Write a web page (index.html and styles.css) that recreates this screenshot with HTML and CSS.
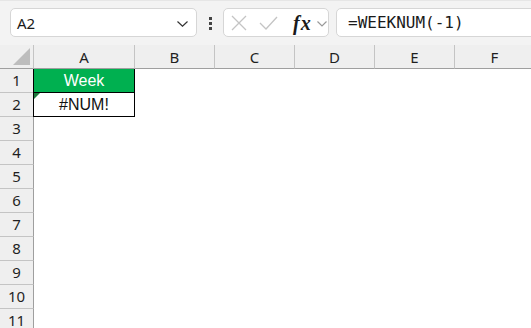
FILE: index.html
```html
<!DOCTYPE html>
<html lang="en">
<head>
    <meta charset="UTF-8">
    <title>WEEKNUM</title>
    <link rel="stylesheet" href="styles.css">
</head>
<body>
    <div class="toolbar">
        <div class="namebox">
            <span class="ref">A2</span>
            <svg class="chev" width="11" height="6" viewBox="0 0 11 6"><path d="M0.5 0.5 L5.5 5.2 L10.5 0.5" fill="none" stroke="#333" stroke-width="1.2"/></svg>
        </div>
        <div class="dots"><span></span><span></span><span></span></div>
        <div class="fxbox">
            <svg class="icon" width="16" height="16" viewBox="0 0 16 16"><path d="M1 1 L15 15 M15 1 L1 15" stroke="#c4c4c4" stroke-width="1.3" fill="none"/></svg>
            <svg class="icon" width="19" height="14" viewBox="0 0 19 14"><path d="M1 7 L7 13 L18 1" stroke="#c4c4c4" stroke-width="1.3" fill="none"/></svg>
            <span class="fx">fx</span>
            <svg class="chev small" width="10" height="6" viewBox="0 0 10 6"><path d="M0.5 0.5 L5 5 L9.5 0.5" fill="none" stroke="#9a9a9a" stroke-width="1.2"/></svg>
        </div>
        <div class="formula">=WEEKNUM(-1)</div>
    </div>

    <div class="sheet">
        <div class="corner">
            <svg width="17" height="17" viewBox="0 0 17 17"><polygon points="17,0 17,17 0,17" fill="#bdbdbd"/></svg>
        </div>
        <div class="colhead">A</div>
        <div class="colhead">B</div>
        <div class="colhead">C</div>
        <div class="colhead">D</div>
        <div class="colhead">E</div>
        <div class="colhead">F</div>

        <div class="rowhead">1</div>
        <div class="cell title">Week</div>
        <div class="cell"></div><div class="cell"></div><div class="cell"></div><div class="cell"></div><div class="cell"></div>

        <div class="rowhead">2</div>
        <div class="cell result"><span class="flag"></span>#NUM!</div>
        <div class="cell"></div><div class="cell"></div><div class="cell"></div><div class="cell"></div><div class="cell"></div>

        <div class="rowhead">3</div><div class="cell"></div><div class="cell"></div><div class="cell"></div><div class="cell"></div><div class="cell"></div><div class="cell"></div>
        <div class="rowhead">4</div><div class="cell"></div><div class="cell"></div><div class="cell"></div><div class="cell"></div><div class="cell"></div><div class="cell"></div>
        <div class="rowhead">5</div><div class="cell"></div><div class="cell"></div><div class="cell"></div><div class="cell"></div><div class="cell"></div><div class="cell"></div>
        <div class="rowhead">6</div><div class="cell"></div><div class="cell"></div><div class="cell"></div><div class="cell"></div><div class="cell"></div><div class="cell"></div>
        <div class="rowhead">7</div><div class="cell"></div><div class="cell"></div><div class="cell"></div><div class="cell"></div><div class="cell"></div><div class="cell"></div>
        <div class="rowhead">8</div><div class="cell"></div><div class="cell"></div><div class="cell"></div><div class="cell"></div><div class="cell"></div><div class="cell"></div>
        <div class="rowhead">9</div><div class="cell"></div><div class="cell"></div><div class="cell"></div><div class="cell"></div><div class="cell"></div><div class="cell"></div>
        <div class="rowhead">10</div><div class="cell"></div><div class="cell"></div><div class="cell"></div><div class="cell"></div><div class="cell"></div><div class="cell"></div>
        <div class="rowhead">11</div><div class="cell"></div><div class="cell"></div><div class="cell"></div><div class="cell"></div><div class="cell"></div><div class="cell"></div>
    </div>
</body>
</html>
```
FILE: styles.css
```css
html, body {
    margin: 0;
    padding: 0;
    background-color: #ffffff;
    overflow: hidden;
}
body {
    width: 531px;
    height: 328px;
    font-family: "Noto Sans", sans-serif;
    color: #1f1f1f;
}
/* top bar with name box and formula bar */
.toolbar {
    display: flex;
    align-items: center;
    height: 45px;
    padding-left: 10px;
    background-color: #f3f3f3;
    border-top: 1px solid #e6e6e6;
    box-sizing: border-box;
}
.namebox, .fxbox, .formula {
    height: 29px;
    box-sizing: border-box;
    background-color: #ffffff;
    border: 1px solid #d6d6d6;
    border-radius: 5px;
    margin-top: -1px;
}
.namebox {
    width: 187px;
    display: flex;
    align-items: center;
    padding-left: 6px;
    padding-right: 8px;
}
.ref {
    flex: 1;
    font-size: 15px;
    color: #1a1a1a;
}
.chev {
    margin-top: 3px;
}
.dots {
    width: 26px;
    display: flex;
    flex-direction: column;
    align-items: center;
    gap: 2px;
}
.dots span {
    width: 3px;
    height: 3px;
    background-color: #444;
}
.fxbox {
    width: 106px;
    display: flex;
    align-items: center;
    padding-left: 7px;
}
.fxbox .icon:first-child {
    margin-right: 12px;
}
.fx {
    font-family: "Liberation Serif", serif;
    font-style: italic;
    font-weight: bold;
    font-size: 20px;
    color: #1a1a1a;
    margin-left: 15px;
    margin-right: 5px;
    letter-spacing: 1px;
    line-height: 1;
}
.chev.small {
    margin-top: 2px;
}
.formula {
    flex: 1;
    margin-left: 7px;
    margin-right: -10px;
    padding-left: 11px;
    font-family: "DejaVu Sans Mono", monospace;
    font-size: 16px;
    line-height: 27px;
    color: #1a1a1a;
}
/* spreadsheet grid */
.sheet {
    display: grid;
    grid-template-columns: 34px 101px 80px 80px 80px 80px 80px;
    grid-auto-rows: 24px;
}
.corner, .colhead {
    background-color: #efefef;
    border-bottom: 1px solid #9f9f9f;
    box-sizing: border-box;
}
.corner {
    border-right: 1px solid #c4c4c4;
    display: flex;
    align-items: flex-end;
    justify-content: flex-end;
    padding: 0 3px 3px 0;
}
.colhead {
    border-right: 1px solid #c4c4c4;
    font-size: 15px;
    text-align: center;
    line-height: 24px;
}
.rowhead {
    background-color: #efefef;
    border-right: 1px solid #9f9f9f;
    border-bottom: 1px solid #c4c4c4;
    box-sizing: border-box;
    font-size: 15px;
    text-align: center;
    line-height: 23px;
}
.cell {
    box-sizing: border-box;
    font-family: "Liberation Sans", Arial, sans-serif;
    font-size: 16px;
    text-align: center;
    line-height: 23px;
    position: relative;
}
.title, .result {
    border-right: 1px solid #000000;
    border-bottom: 1px solid #000000;
    margin-left: -1px;
    border-left: 1px solid #000000;
}
.title {
    background-color: #00b050;
    color: #ffffff;
}
.result {
    background-color: #ffffff;
    color: #111111;
}
/* error indicator in the corner of the cell */
.flag {
    position: absolute;
    left: 0;
    top: 0;
    width: 0;
    height: 0;
    border-top: 6px solid #1d7a3c;
    border-right: 6px solid transparent;
}
```
